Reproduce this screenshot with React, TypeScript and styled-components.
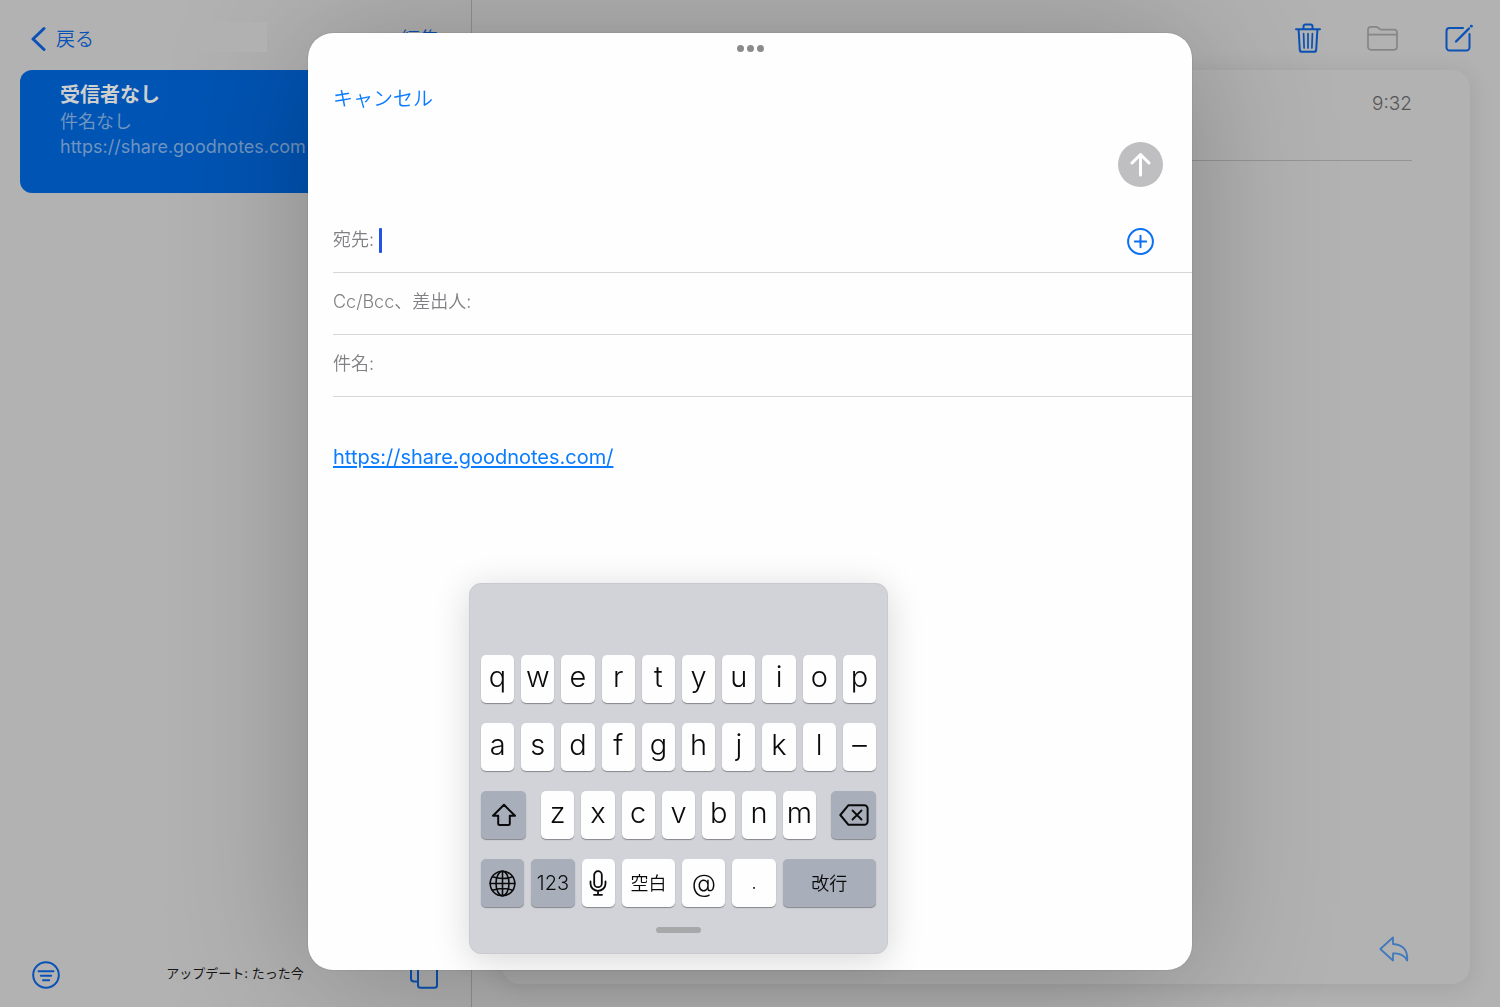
import React from "react";
import styled, { createGlobalStyle } from "styled-components";

const GlobalStyle = createGlobalStyle`
  *, *::before, *::after { box-sizing: border-box; }
  body {
    margin: 0;
    background: #b2b2b2;
    font-family: Inter, "Noto Sans CJK JP", sans-serif;
  }
  button, input {
    margin: 0;
    padding: 0;
    border: 0;
    background: none;
    color: inherit;
    font: inherit;
  }
  button { cursor: pointer; }
  svg { display: block; }
`;

const tint = "#0a52b5";

const Screen = styled.div`
  display: grid;
  grid-template-columns: 472px 1fr;
  height: 100vh;
  overflow: hidden;
`;

/* ---------- Mailbox list ---------- */

const Sidebar = styled.aside`
  display: flex;
  flex-direction: column;
  border-right: 1px solid #939393;
`;

const SidebarHeader = styled.header`
  display: grid;
  grid-template-columns: 1fr auto 1fr;
  align-items: center;
  height: 70px;
  padding: 8px 32px 0 31px;
`;

const TextButton = styled.button`
  display: flex;
  align-items: center;
  gap: 10px;
  color: ${tint};
  font-size: 19px;
  font-weight: 350;
  line-height: 24px;
`;

const BackLabel = styled.span`
  padding-top: 2px;
`;

const EditButton = styled(TextButton)`
  justify-self: end;
  padding-top: 2px;
`;

const MailboxTitle = styled.span`
  position: relative;
  z-index: 2;
  width: 67px;
  height: 30px;
  margin: 0 4px 4px 0;
  background: #b1b1b1;
`;

const MessageList = styled.ul`
  flex: 1;
  margin: 0;
  padding: 0 20px;
  list-style: none;
`;

const MessageItem = styled.li`
  height: 123px;
  padding: 11px 20px 0 40px;
  border-radius: 12px;
  background: #0054b4;
  color: #6f95c0;
  font-size: 18px;
`;

const Sender = styled.strong`
  display: block;
  color: #cfcfcf;
  font-size: 20px;
  font-weight: 700;
  line-height: 28px;
`;

const Line = styled.span`
  display: block;
  line-height: 25px;
  white-space: nowrap;
`;

const SidebarFooter = styled.footer`
  display: flex;
  align-items: center;
  justify-content: space-between;
  height: 64px;
  padding: 0 32px;
`;

const Status = styled.span`
  padding-bottom: 4px;
  color: #161616;
  font-size: 13px;
  line-height: 20px;
`;

const IconButton = styled.button<{ $color?: string }>`
  color: ${(p) => p.$color ?? tint};
`;

/* ---------- Message detail ---------- */

const Detail = styled.main`
  display: flex;
  flex-direction: column;
  min-width: 0;
  padding: 0 30px 23px;
`;

const Toolbar = styled.div`
  display: flex;
  align-items: center;
  justify-content: flex-end;
  gap: 46px;
  height: 70px;
  padding-top: 6px;
  margin-right: -3px;
`;

const MessageCard = styled.article`
  display: flex;
  flex: 1;
  flex-direction: column;
  justify-content: space-between;
  padding: 0 58px 22px;
  border-radius: 18px;
  background: #b2b2b2;
  box-shadow: 0 3px 24px rgba(0, 0, 0, 0.1);
`;

const MessageMeta = styled.div`
  height: 91px;
  padding-top: 22px;
  border-bottom: 1px solid #959595;
  color: #575757;
  font-size: 19px;
  font-weight: 350;
  line-height: 24px;
  text-align: right;
`;

const ReplyButton = styled(IconButton)`
  align-self: flex-end;
  margin-right: 3px;
`;

/* ---------- Compose sheet ---------- */

const Overlay = styled.div`
  position: fixed;
  inset: 0;
  z-index: 1;
  display: flex;
  justify-content: center;
  padding: 33px 24px 37px;
`;

const Sheet = styled.section`
  position: relative;
  display: flex;
  flex: 0 1 884px;
  flex-direction: column;
  border-radius: 25px;
  background: #fefefe;
  box-shadow: 0 0 2px rgba(0, 0, 0, 0.2), 0 10px 140px rgba(0, 0, 0, 0.25);
`;

const Grabber = styled.button`
  display: flex;
  align-self: center;
  gap: 3px;
  height: 31px;
  padding-top: 12px;
`;

const Dot = styled.span`
  width: 7px;
  height: 7px;
  border-radius: 50%;
  background: #8b8b8b;
`;

const SheetNav = styled.div`
  display: flex;
  padding: 20px 25px 28px;
`;

const CancelButton = styled.button`
  color: #0a7cff;
  font-size: 20px;
  font-weight: 350;
  line-height: 30px;
`;

const SendRow = styled.div`
  display: flex;
  justify-content: flex-end;
  padding: 0 29px 24px;
`;

const SendButton = styled.button`
  display: grid;
  place-items: center;
  width: 45px;
  height: 45px;
  border-radius: 50%;
  background: #bfbfc1;
  color: #fff;
`;

const Field = styled.div`
  display: flex;
  align-items: center;
  height: 62px;
  margin-left: 25px;
  padding-right: 38px;
  border-bottom: 1px solid #d6d6d8;
  color: #808084;
  font-size: 18px;
  font-weight: 350;
  line-height: 24px;
`;

const FieldLabel = styled.label`
  padding-bottom: 3px;
`;

const Caret = styled.span`
  width: 3px;
  height: 25px;
  margin: 0 0 2px 5px;
  border-radius: 1px;
  background: #2452e6;
`;

const FieldInput = styled.input`
  flex: 1;
  min-width: 0;
  height: 40px;
  color: #111;
  outline: none;
`;

const Body = styled.div`
  padding: 45px 25px 0;
  font-size: 20px;
  line-height: 30px;
`;

const BodyLink = styled.a`
  color: #0a7cff;
  text-decoration: underline;
  text-decoration-thickness: 2px;
  text-underline-offset: 2px;
`;

/* ---------- Floating keyboard ---------- */

const Keyboard = styled.div`
  position: absolute;
  left: 161px;
  bottom: 16px;
  display: flex;
  flex-direction: column;
  gap: 20px;
  width: 419px;
  padding: 71px 11px 20px;
  border: 1px solid #c8cad0;
  border-radius: 12px;
  background: #d1d3d9;
  box-shadow: 0 6px 36px rgba(0, 0, 0, 0.16);
`;

const KeyRow = styled.div<{ $gap?: number }>`
  display: flex;
  gap: ${(p) => p.$gap ?? 7}px;
`;

const LetterGroup = styled.div`
  display: flex;
  flex: 1;
  gap: 7px;
`;

const Key = styled.button<{ $dark?: boolean; $basis?: number; $size?: number }>`
  display: flex;
  align-items: center;
  justify-content: center;
  flex: 1 1 ${(p) => p.$basis ?? 0}px;
  min-width: 0;
  height: 48px;
  border-radius: 5px;
  background: ${(p) => (p.$dark ? "#a8afba" : "#fefefe")};
  box-shadow: 0 1px 1px #85878c;
  color: #0a0a0a;
  font-size: ${(p) => p.$size ?? 18}px;
  font-weight: 350;
  line-height: 36px;
`;

const WordKey = styled(Key)`
  padding-top: 2px;
`;

const LetterKey = styled(Key)`
  padding-bottom: 4px;
  font-size: 29px;
`;

const FixedKey = styled(Key)`
  flex: 0 0 45px;
`;

const KeyboardHandle = styled.span`
  align-self: center;
  width: 45px;
  height: 6px;
  border-radius: 3px;
  background: #a8a8aa;
`;

type IconProps = {
  w: number;
  h: number;
  stroke?: number;
  children: React.ReactNode;
};

const Icon = ({ w, h, stroke = 2, children }: IconProps) => (
  <svg
    width={w}
    height={h}
    viewBox={`0 0 ${w} ${h}`}
    fill="none"
    stroke="currentColor"
    strokeWidth={stroke}
    strokeLinecap="round"
    strokeLinejoin="round"
    aria-hidden="true"
  >
    {children}
  </svg>
);

const letters = (keys: string) =>
  keys.split("").map((k) => <LetterKey key={k}>{k}</LetterKey>);

export default function App() {
  return (
    <>
      <GlobalStyle />
      <Screen>
        <Sidebar>
          <SidebarHeader>
            <TextButton>
              <Icon w={15} h={26} stroke={3}>
                <path d="M13 2.500 2 13l11 10.500" />
              </Icon>
              <BackLabel>戻る</BackLabel>
            </TextButton>
            <MailboxTitle />
            <EditButton>編集</EditButton>
          </SidebarHeader>
          <MessageList>
            <MessageItem>
              <Sender>受信者なし</Sender>
              <Line>件名なし</Line>
              <Line>https://share.goodnotes.com</Line>
            </MessageItem>
          </MessageList>
          <SidebarFooter>
            <IconButton aria-label="フィルタ">
              <Icon w={28} h={28}>
                <circle cx="14" cy="14" r="12.800" />
                <path d="M6.500 10.200h15M8.800 14.700h10.400M11 19.300h6.200" />
              </Icon>
            </IconButton>
            <Status>アップデート: たった今</Status>
            <IconButton aria-label="新規ウインドウ">
              <Icon w={29} h={28}>
                <path d="M8 20.500H4a3 3 0 0 1-3-3V4a3 3 0 0 1 3-3h12a3 3 0 0 1 3 3" />
                <rect x="8" y="4.500" width="19" height="22.300" rx="2.500" />
              </Icon>
            </IconButton>
          </SidebarFooter>
        </Sidebar>

        <Detail>
          <Toolbar>
            <IconButton aria-label="削除">
              <Icon w={26} h={30}>
                <path d="M1 6.300h24M8.500 6V3.200A1.800 1.800 0 0 1 10.300 1.400h5.400a1.800 1.800 0 0 1 1.800 1.800V6M3.600 6.500l1.200 20.300a2.200 2.200 0 0 0 2.200 2h12a2.200 2.200 0 0 0 2.200-2L22.400 6.500" />
                <path strokeWidth="1.700" d="M8.600 10.500l.5 14.500M13 10.500V25M17.400 10.500l-.5 14.500" />
              </Icon>
            </IconButton>
            <IconButton aria-label="移動" $color="#868686">
              <Icon w={32} h={26} stroke={1.7}>
                <path d="M1 21.800V4.800a3 3 0 0 1 3-3h4.700c1 0 1.700.3 2.400.9l1.500 1.300c.5.400 1 .6 1.700.6h12.700a3 3 0 0 1 3 3v14.200a3 3 0 0 1-3 3h-23a3 3 0 0 1-3-3zM1 9.600h29" />
              </Icon>
            </IconButton>
            <IconButton aria-label="作成">
              <Icon w={28} h={28}>
                <path d="M18 4H4.500a3 3 0 0 0-3 3v16.500a3 3 0 0 0 3 3h17a3 3 0 0 0 3-3V10" />
                <path strokeWidth="2.400" d="M11 17.500 24 4.500" />
                <path strokeWidth="2.800" d="M26.300 2.200h.1" />
              </Icon>
            </IconButton>
          </Toolbar>
          <MessageCard>
            <MessageMeta>9:32</MessageMeta>
            <ReplyButton aria-label="返信" $color="#4179bd">
              <Icon w={30} h={26} stroke={1.8}>
                <path d="M14 1.500 1.300 13 14 24.500V17.500c6-.4 11.200 1 14.200 7C29 14.500 24 8.500 14 8z" />
              </Icon>
            </ReplyButton>
          </MessageCard>
        </Detail>
      </Screen>

      <Overlay>
        <Sheet role="dialog" aria-label="新規メッセージ">
          <Grabber aria-label="マルチタスク">
            <Dot />
            <Dot />
            <Dot />
          </Grabber>
          <SheetNav>
            <CancelButton>キャンセル</CancelButton>
          </SheetNav>
          <SendRow>
            <SendButton aria-label="送信">
              <Icon w={21} h={25} stroke={3}>
                <path d="M10.500 23V2.500M2 11l8.500-8.500L19 11" />
              </Icon>
            </SendButton>
          </SendRow>
          <Field>
            <FieldLabel htmlFor="to">宛先:</FieldLabel>
            <Caret />
            <FieldInput id="to" />
            <IconButton aria-label="連絡先を追加" $color="#0a70f5">
              <Icon w={27} h={27}>
                <circle cx="13.500" cy="13.500" r="12.400" />
                <path d="M13.500 7.800v11.400M7.800 13.500h11.400" />
              </Icon>
            </IconButton>
          </Field>
          <Field>
            <FieldLabel htmlFor="cc">Cc/Bcc、差出人:</FieldLabel>
            <FieldInput id="cc" />
          </Field>
          <Field>
            <FieldLabel htmlFor="subject">件名:</FieldLabel>
            <FieldInput id="subject" />
          </Field>
          <Body>
            <BodyLink href="https://share.goodnotes.com/">
              https://share.goodnotes.com/
            </BodyLink>
          </Body>

          <Keyboard>
            <KeyRow>{letters("qwertyuiop")}</KeyRow>
            <KeyRow>{letters("asdfghjkl–")}</KeyRow>
            <KeyRow $gap={15}>
              <FixedKey $dark aria-label="シフト">
                <Icon w={26} h={24}>
                  <path d="M13 1.800 24 12.800h-5.200v7.700a1.500 1.500 0 0 1-1.500 1.500H8.700a1.500 1.500 0 0 1-1.500-1.500v-7.700H2z" />
                </Icon>
              </FixedKey>
              <LetterGroup>{letters("zxcvbnm")}</LetterGroup>
              <FixedKey $dark aria-label="削除">
                <Icon w={30} h={22}>
                  <path d="M9.500 1.200h15.800a3.300 3.300 0 0 1 3.300 3.300v13a3.300 3.300 0 0 1-3.300 3.300H9.500L1.300 11z" />
                  <path strokeWidth="1.800" d="M13.500 6.500l9 9M22.500 6.500l-9 9" />
                </Icon>
              </FixedKey>
            </KeyRow>
            <KeyRow>
              <Key $dark $basis={43} aria-label="言語">
                <Icon w={27} h={27} stroke={1.6}>
                  <circle cx="13.500" cy="13.500" r="12.300" />
                  <ellipse cx="13.500" cy="13.500" rx="6.500" ry="12.300" />
                  <path d="M13.500 1.200v24.600M1.200 13.500h24.600M3.500 6.800q10 3.500 20 0M3.500 20.200q10-3.500 20 0" />
                </Icon>
              </Key>
              <Key $dark $basis={43} $size={20}>123</Key>
              <Key $basis={33} aria-label="音声入力">
                <Icon w={18} h={26} stroke={1.8}>
                  <rect x="5.200" y="1.200" width="7.600" height="16" rx="3.800" />
                  <path d="M1.500 11.500v2.300a7.500 7 0 0 0 15 0v-2.300M9 20.800v4M5 24.800h8" />
                </Icon>
              </Key>
              <WordKey $basis={53}>空白</WordKey>
              <Key $basis={43} $size={25}>@</Key>
              <Key $basis={43}>.</Key>
              <WordKey $dark $basis={93}>改行</WordKey>
            </KeyRow>
            <KeyboardHandle />
          </Keyboard>
        </Sheet>
      </Overlay>
    </>
  );
}
